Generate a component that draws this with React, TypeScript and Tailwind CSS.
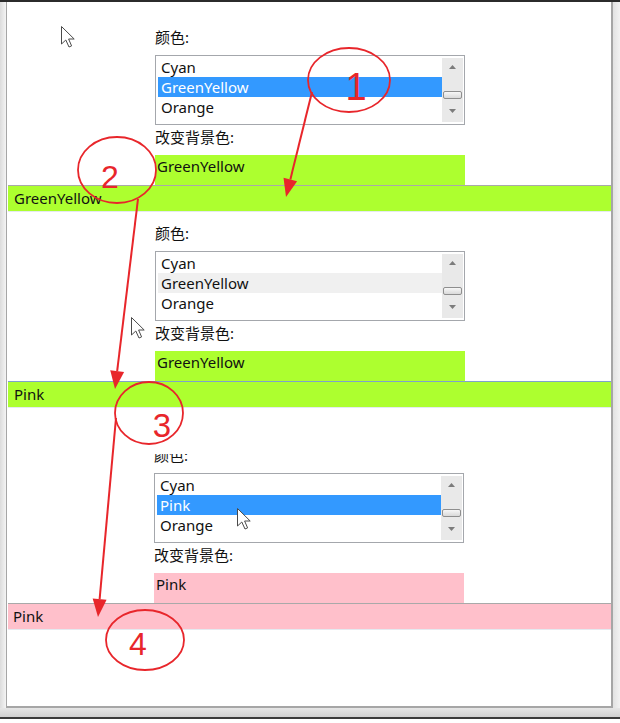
import React from "react";

const RED = "#e8262b";

function Tri({ up }: { up: boolean }) {
  return (
    <svg width="7" height="4" viewBox="0 0 7 4">
      <polygon points={up ? "3.5,0 7,4 0,4" : "0,0 7,0 3.5,4"} fill="#7c7c7c" />
    </svg>
  );
}

function ListBox({ selected, selClass }: { selected: string; selClass: string }) {
  const items = ["Cyan", selected, "Orange"];
  return (
    <div className="flex h-[70px] w-[310px] border border-[#a4a7ac] bg-white">
      <div className="flex-1 pl-[2px] pt-[1px]">
        {items.map((it, i) => (
          <div
            key={i}
            className={
              i === 1
                ? "h-[20px] pl-[3px] leading-[20px] " + selClass
                : "h-[20px] pl-[3px] leading-[20px] text-[#111111]"
            }
          >
            {it}
          </div>
        ))}
      </div>
      <div className="my-[2px] mr-[1px] flex w-[21px] flex-col items-center bg-[#e9e9e9]">
        <div className="flex h-[18px] items-center justify-center">
          <Tri up />
        </div>
        <div className="mt-[15px] h-[8px] w-[19px] rounded-[2px] border border-[#8e8e8e] bg-gradient-to-b from-[#f7f7f7] to-[#d9d9d9]" />
        <div className="mt-[3px] flex h-[18px] items-center justify-center">
          <Tri up={false} />
        </div>
      </div>
    </div>
  );
}

type PanelProps = {
  selected: string;
  selClass: string;
  boxText: string;
  boxClass: string;
  barText: string;
  barClass: string;
  indent: string;
  barPad: string;
  cut?: boolean;
};

function Panel(p: PanelProps) {
  return (
    <div>
      <div className={p.indent}>
        {p.cut ? (
          <div className="flex h-[20px] flex-col justify-end">
            <div className="h-[11px] overflow-hidden">
              <div className="-mt-[9px] leading-[20px]">颜色:</div>
            </div>
          </div>
        ) : (
          <div className="h-[20px] leading-[20px]">颜色:</div>
        )}
        <div className="mt-[8px]">
          <ListBox selected={p.selected} selClass={p.selClass} />
        </div>
        <div className="mt-[2px] h-[20px] leading-[20px]">改变背景色:</div>
        <div className={"mt-[8px] h-[30px] w-[310px] pl-[2px] pt-[1px] leading-[20px] " + p.boxClass}>
          {p.boxText}
        </div>
      </div>
      <div className={"ml-[1px] flex h-[27px] items-center border-t border-b border-b-[#e4eaf0] " + p.barPad + " " + p.barClass}>
        {p.barText}
      </div>
    </div>
  );
}

function Arrow({ x1, y1, x2, y2 }: { x1: number; y1: number; x2: number; y2: number }) {
  const dx = x2 - x1;
  const dy = y2 - y1;
  const len = Math.sqrt(dx * dx + dy * dy);
  const ux = dx / len;
  const uy = dy / len;
  const bx = x2 - ux * 18;
  const by = y2 - uy * 18;
  const px = -uy * 7;
  const py = ux * 7;
  return (
    <g>
      <line x1={x1} y1={y1} x2={bx} y2={by} stroke={RED} strokeWidth="2" />
      <polygon points={`${x2},${y2} ${bx + px},${by + py} ${bx - px},${by - py}`} fill={RED} />
    </g>
  );
}

function Cursor({ x, y }: { x: number; y: number }) {
  return (
    <path
      transform={`translate(${x} ${y})`}
      d="M0.5 0.5 L0.5 18 L4.8 14 L8 21 L10.6 19.9 L7.6 13 L13.2 13 Z"
      fill="#ffffff"
      stroke="#4a4a4a"
      strokeWidth="1"
      strokeLinejoin="round"
    />
  );
}

export default function App() {
  return (
    <div className="relative h-[723px] w-[620px] overflow-hidden bg-white font-['Noto_Sans','Noto_Sans_CJK_SC',sans-serif] text-[15px] text-[#111111]">
      <div className="h-[2px] bg-[#2b2b2b]" />
      <div className="flex h-[706px]">
        <div className="w-[6px] bg-gradient-to-r from-[#dcdcdc] to-[#f4f4f4]" />
        <div className="flex w-[607px] flex-col border-b-2 border-l border-r-2 border-[#a6a6a6] bg-white pt-[25px]">
          <Panel
            selected="GreenYellow"
            selClass="bg-[#3399ff] text-white"
            boxText="GreenYellow"
            boxClass="bg-[#adff2f]"
            barText="GreenYellow"
            barClass="border-t-[#a9a9a9] bg-[#adff2f]"
            indent="pl-[148px]"
            barPad="pl-[6px]"
          />
          <div className="mt-[11px]">
            <Panel
              selected="GreenYellow"
              selClass="bg-[#f0f0f0] text-[#111111]"
              boxText="GreenYellow"
              boxClass="bg-[#adff2f]"
              barText="Pink"
              barClass="border-t-[#7fa2cc] bg-[#adff2f]"
              indent="pl-[148px]"
              barPad="pl-[6px]"
            />
          </div>
          <div className="mt-[37px]">
            <Panel
              selected="Pink"
              selClass="bg-[#3399ff] text-white"
              boxText="Pink"
              boxClass="bg-[#ffc0cb]"
              barText="Pink"
              barClass="border-t-[#a9a9a9] bg-[#ffc0cb]"
              indent="pl-[147px]"
              barPad="pl-[5px]"
              cut
            />
          </div>
        </div>
        <div className="w-[7px] bg-gradient-to-r from-[#e2e2e2] to-[#f2f2f2]" />
      </div>
      <div className="h-[9px] bg-gradient-to-b from-[#e6e6e6] to-[#cfcfcf]" />
      <div className="h-[2px] bg-[#3a3a3a]" />

      <svg
        className="pointer-events-none absolute left-0 top-0"
        width="620"
        height="723"
        viewBox="0 0 620 723"
      >
        <Cursor x={61} y={26} />
        <Cursor x={131} y={317} />
        <Cursor x={237} y={508} />

        <ellipse cx="349" cy="80" rx="41" ry="32" fill="none" stroke={RED} strokeWidth="1.8" />
        <ellipse cx="117" cy="170" rx="39" ry="33" fill="none" stroke={RED} strokeWidth="1.8" />
        <ellipse cx="149" cy="413" rx="34" ry="31" fill="none" stroke={RED} strokeWidth="1.8" />
        <ellipse cx="145" cy="640" rx="39" ry="30" fill="none" stroke={RED} strokeWidth="1.8" />

        <g fill={RED} fontFamily="'Liberation Sans', Arial, sans-serif" textAnchor="middle">
          <text x="356" y="100" fontSize="38">1</text>
          <text x="110" y="188" fontSize="32">2</text>
          <text x="162" y="437" fontSize="33">3</text>
          <text x="138" y="655" fontSize="32">4</text>
        </g>

        <Arrow x1={312} y1={92} x2={286} y2={197} />
        <Arrow x1={138} y1={199} x2={115} y2={389} />
        <Arrow x1={116} y1={418} x2={98} y2={617} />
      </svg>
    </div>
  );
}
